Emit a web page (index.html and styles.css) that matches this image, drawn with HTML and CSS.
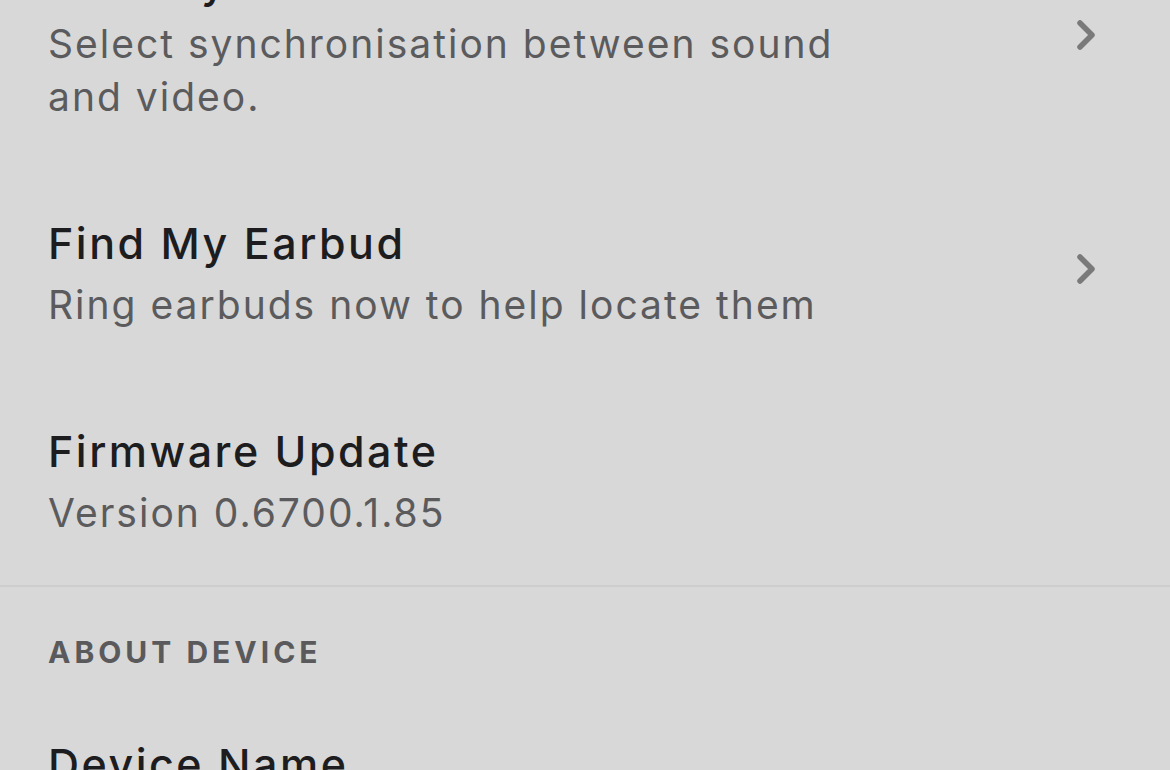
FILE: index.html
```html
<!DOCTYPE html>
<html lang="en">
<head>
  <meta charset="UTF-8">
  <title>Device settings</title>
  <link rel="stylesheet" href="styles.css">
</head>
<body>
  <div class="settings">
    <div class="row">
      <div class="row-text">
        <div class="row-title">Latency</div>
        <div class="row-sub">Select synchronisation between sound and video.</div>
      </div>
      <svg class="chevron" viewBox="0 0 22 34"><path d="M5 5 L17 17 L5 29"/></svg>
    </div>

    <div class="row">
      <div class="row-text">
        <div class="row-title">Find My Earbud</div>
        <div class="row-sub">Ring earbuds now to help locate them</div>
      </div>
      <svg class="chevron" viewBox="0 0 22 34"><path d="M5 5 L17 17 L5 29"/></svg>
    </div>

    <div class="row">
      <div class="row-text">
        <div class="row-title">Firmware Update</div>
        <div class="row-sub">Version 0.6700.1.85</div>
      </div>
    </div>

    <div class="divider"></div>

    <div class="section-head">ABOUT DEVICE</div>

    <div class="row">
      <div class="row-text">
        <div class="row-title">Device Name</div>
        <div class="row-sub">Ear (a)</div>
      </div>
    </div>
  </div>
</body>
</html>
```

FILE: styles.css
```css
body {
  margin: 0;
  background-color: #d8d8d8;
  font-family: 'Inter', 'Liberation Sans', sans-serif;
  overflow: hidden;
}
.settings {
  margin-top: -92px;
}
.row {
  display: flex;
  align-items: center;
  justify-content: space-between;
  padding: 46px 73px 46px 48px;
}
.row-text {
  max-width: 820px;
}
.row-title {
  font-size: 43px;
  line-height: 56px;
  font-weight: 500;
  letter-spacing: 2.5px;
  color: #1d1d1f;
  margin-bottom: 7px;
}
.row-sub {
  font-size: 39px;
  line-height: 53px;
  letter-spacing: 2px;
  color: #5b5b5d;
}
.chevron {
  width: 22px;
  height: 34px;
  margin-bottom: 8px;
  flex-shrink: 0;
}
.chevron path {
  fill: none;
  stroke: #7a7a7a;
  stroke-width: 5.5;
  stroke-linecap: round;
  stroke-linejoin: round;
}
.divider {
  height: 2px;
  background-color: #cdcdcd;
}
.section-head {
  padding: 45px 48px 18px;
  font-size: 30px;
  line-height: 40px;
  font-weight: 700;
  letter-spacing: 4px;
  color: #5a5a5c;
}
```
